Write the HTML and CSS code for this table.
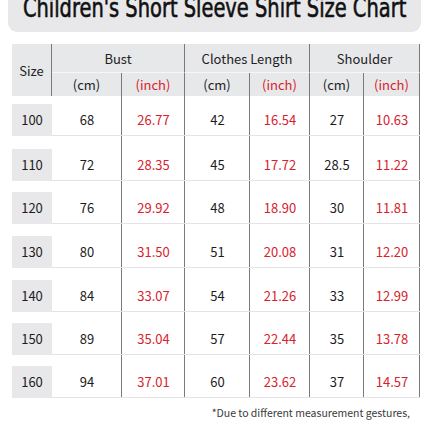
FILE: index.html
```html
<!DOCTYPE html>
<html>
<head>
<meta charset="utf-8">
<link rel="stylesheet" href="styles.css">
</head>
<body>
<div class="banner"><h1 class="title">Children's Short Sleeve Shirt Size Chart</h1></div>
<div class="chart">
  <div class="head">
    <div class="h-size">Size</div>
    <div class="h-group g1">Bust</div>
    <div class="h-group g2">Clothes Length</div>
    <div class="h-group g3">Shoulder</div>
    <div class="h-sub">(cm)</div>
    <div class="h-sub red">(inch)</div>
    <div class="h-sub">(cm)</div>
    <div class="h-sub red">(inch)</div>
    <div class="h-sub">(cm)</div>
    <div class="h-sub red">(inch)</div>
  </div>
  <div class="body">
    <div class="row r1"><div class="c size">100</div><div class="c">68</div><div class="c red">26.77</div><div class="c">42</div><div class="c red">16.54</div><div class="c">27</div><div class="c red">10.63</div></div>
    <div class="row r2"><div class="c size">110</div><div class="c">72</div><div class="c red">28.35</div><div class="c">45</div><div class="c red">17.72</div><div class="c">28.5</div><div class="c red">11.22</div></div>
    <div class="row r3"><div class="c size">120</div><div class="c">76</div><div class="c red">29.92</div><div class="c">48</div><div class="c red">18.90</div><div class="c">30</div><div class="c red">11.81</div></div>
    <div class="row r4"><div class="c size">130</div><div class="c">80</div><div class="c red">31.50</div><div class="c">51</div><div class="c red">20.08</div><div class="c">31</div><div class="c red">12.20</div></div>
    <div class="row r5"><div class="c size">140</div><div class="c">84</div><div class="c red">33.07</div><div class="c">54</div><div class="c red">21.26</div><div class="c">33</div><div class="c red">12.99</div></div>
    <div class="row r6"><div class="c size">150</div><div class="c">89</div><div class="c red">35.04</div><div class="c">57</div><div class="c red">22.44</div><div class="c">35</div><div class="c red">13.78</div></div>
    <div class="row r7"><div class="c size">160</div><div class="c">94</div><div class="c red">37.01</div><div class="c">60</div><div class="c red">23.62</div><div class="c">37</div><div class="c red">14.57</div></div>
  </div>
</div>
<p class="note">*Due to different measurement gestures,</p>
</body>
</html>
```
FILE: styles.css
```css
html, body {
  margin: 0;
  padding: 0;
  background: #fff;
  width: 430px;
  height: 430px;
  overflow: hidden;
  font-family: "Noto Sans CJK SC", "Noto Sans", sans-serif;
  color: #1c1c1c;
}
.banner {
  display: flex;
  justify-content: center;
  margin: 0 9px 0 8px;
  height: 32px;
  background: #e8e8ea;
  border-radius: 0 0 9px 9px;
}
.title {
  margin: -6px 0 0 0;
  font-family: "DejaVu Sans Condensed", "DejaVu Sans", sans-serif;
  font-weight: normal;
  font-size: 27px;
  line-height: 27px;
  color: #111;
  -webkit-text-stroke: 0.6px #111;
  white-space: nowrap;
  transform: scaleX(0.8);
  transform-origin: center top;
}
.chart {
  margin: 12px 10px 0 12px;
  width: 408px;
}
.head {
  display: grid;
  grid-template-columns: 40px 70px 63px 65px 60px 54px 56px;
  grid-template-rows: 29px 23px;
  background: #e7e8ea;
  font-size: 13px;
  color: #222;
}
.head > div {
  display: flex;
  align-items: center;
  justify-content: center;
  border-right: 1px solid #7a7a7a;
}
.h-size {
  grid-row: 1 / 3;
  grid-column: 1;
  padding-top: 1px;
}
.h-group {
  grid-row: 1;
  border-bottom: 1px solid #f6f6f7;
}
.g1 { grid-column: 2 / 4; }
.g2 { grid-column: 4 / 6; }
.g3 { grid-column: 6 / 8; }
.h-sub { grid-row: 2; }
.red { color: #d8222b; }
.body {
  background-image:
    linear-gradient(#7a7a7a, #7a7a7a),
    linear-gradient(#7a7a7a, #7a7a7a),
    linear-gradient(#7a7a7a, #7a7a7a),
    linear-gradient(#7a7a7a, #7a7a7a),
    linear-gradient(#7a7a7a, #7a7a7a),
    linear-gradient(#7a7a7a, #7a7a7a);
  background-size: 1px 100%;
  background-repeat: no-repeat;
  background-position: 109px 0, 172px 0, 237px 0, 297px 0, 351px 0, 407px 0;
}
.row {
  display: grid;
  grid-template-columns: 40px 70px 63px 65px 60px 54px 56px;
  font-size: 13px;
}
.c {
  height: 32px;
  padding-top: 11px;
  display: flex;
  align-items: flex-end;
  justify-content: center;
  line-height: 32px;
  background: linear-gradient(#e3e3e5, #e3e3e5) no-repeat left bottom / 100% 1px;
}
.r1 .c { padding-top: 8px; }
.r2 .c { padding-top: 13px; }
.r4 .c, .r5 .c { padding-top: 12px; }
.c.size {
  background: #e8e8ea;
  background-clip: content-box;
  color: #1c1c1c;
}
.note {
  margin: 8px 20px 0 0;
  text-align: right;
  font-size: 10.5px;
  line-height: 14px;
  color: #3a3a3a;
}
```
